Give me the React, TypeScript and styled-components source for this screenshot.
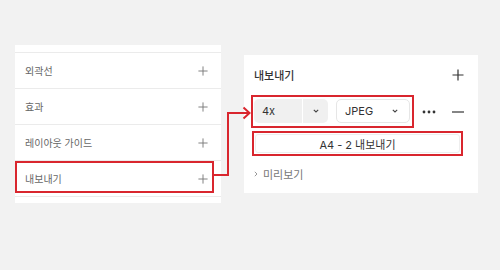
import styled, { createGlobalStyle } from 'styled-components'

const GlobalStyle = createGlobalStyle`
  * { box-sizing: border-box; }
  body {
    margin: 0;
    background: #f2f2f2;
    font-family: Inter, "Noto Sans CJK KR", sans-serif;
  }
`

const RED = '#d9262e'

const Page = styled.div`
  position: relative;
  width: 500px;
  height: 270px;
  display: flex;
  align-items: flex-start;
  gap: 23px;
  padding-left: 15px;
  background: #f2f2f2;
`

const LeftPanel = styled.div`
  margin-top: 45px;
  width: 206px;
  background: #fff;
  padding: 7px 0 6px;
`

const Row = styled.div<{ $active?: boolean }>`
  position: relative;
  height: 36px;
  display: flex;
  align-items: center;
  justify-content: space-between;
  padding: 0 13px 0 10px;
  border-top: 1px solid #ebebeb;
  font-size: 10px;
  color: #666;
  &:last-child { border-bottom: 1px solid #ebebeb; height: 37px; }
  &::after {
    content: '';
    display: ${(p) => (p.$active ? 'block' : 'none')};
    position: absolute;
    top: 0;
    bottom: 3px;
    left: 0;
    right: 7px;
    border: 2px solid ${RED};
  }
`

const RightPanel = styled.div`
  margin-top: 55px;
  width: 234px;
  background: #fff;
  padding: 12px 14px 11px 10px;
  display: flex;
  flex-direction: column;
`

const TitleRow = styled.div`
  height: 16px;
  display: flex;
  align-items: center;
  justify-content: space-between;
  font-size: 11px;
  font-weight: 500;
  color: #333;
`

const SettingsRow = styled.div`
  margin-top: 12px;
  display: flex;
  align-items: center;
`

const Highlight = styled.div<{ $shift: number }>`
  margin-left: ${(p) => p.$shift}px;
  border: 2px solid ${RED};
`

const SelectGroup = styled(Highlight)`
  display: flex;
  gap: 8px;
  padding: 2px 2px 3px 1px;
`

const ScaleSelect = styled.div`
  width: 74px;
  height: 24px;
  display: flex;
  background: #f0f0f0;
  border-radius: 5px;
  font-size: 11px;
  color: #333;
`

const ScaleValue = styled.div`
  width: 49px;
  display: flex;
  align-items: center;
  padding-left: 8px;
  border-right: 1px solid #fff;
`

const ScaleCaret = styled.div`
  flex: 1;
  display: flex;
  align-items: center;
  justify-content: center;
`

const FormatSelect = styled.div`
  width: 74px;
  height: 24px;
  display: flex;
  align-items: center;
  justify-content: space-between;
  padding: 0 11px 0 8px;
  background: #fff;
  border: 1px solid #e6e6e6;
  border-radius: 5px;
  font-size: 11px;
  color: #333;
`

const IconButton = styled.div<{ $ml: number }>`
  margin-left: ${(p) => p.$ml}px;
  display: flex;
  align-items: center;
`

const ButtonFrame = styled(Highlight)`
  margin-top: 3px;
  width: 211px;
  padding: 1px;
`

const ExportButton = styled.div`
  height: 19px;
  display: flex;
  align-items: center;
  justify-content: center;
  border: 1px solid #eee;
  border-radius: 3px;
  font-size: 11px;
  color: #333;
`

const PreviewRow = styled.div`
  margin-top: 10px;
  height: 16px;
  display: flex;
  align-items: center;
  gap: 5px;
  font-size: 11px;
  color: #777;
`

const Connector = styled.svg`
  position: absolute;
  left: 0;
  top: 0;
  pointer-events: none;
`

const Plus = ({ size, color, w }: { size: number; color: string; w: number }) => (
  <svg width={size} height={size} viewBox="0 0 12 12">
    <path d="M6 0.5V11.5M0.5 6H11.5" stroke={color} strokeWidth={w} fill="none" />
  </svg>
)

const Caret = () => (
  <svg width="6" height="4" viewBox="0 0 6 4">
    <path d="M0.8 0.8L3 3L5.2 0.8" stroke="#444" strokeWidth="1.1" fill="none" />
  </svg>
)

const sections = ['외곽선', '효과', '레이아웃 가이드', '내보내기']

export default function App() {
  return (
    <>
      <GlobalStyle />
      <Page>
        <LeftPanel>
          {sections.map((s, i) => (
            <Row key={s} $active={i === sections.length - 1}>
              <span>{s}</span>
              <Plus size={10} color="#777" w={1.1} />
            </Row>
          ))}
        </LeftPanel>

        <RightPanel>
          <TitleRow>
            <span>내보내기</span>
            <Plus size={12} color="#333" w={1.2} />
          </TitleRow>
          <SettingsRow>
            <SelectGroup $shift={-3}>
              <ScaleSelect>
                <ScaleValue>4x</ScaleValue>
                <ScaleCaret><Caret /></ScaleCaret>
              </ScaleSelect>
              <FormatSelect>
                <span>JPEG</span>
                <Caret />
              </FormatSelect>
            </SelectGroup>
            <IconButton $ml={8}>
              <svg width="14" height="4" viewBox="0 0 14 4">
                <circle cx="2" cy="2" r="1.4" fill="#333" />
                <circle cx="7" cy="2" r="1.4" fill="#333" />
                <circle cx="12" cy="2" r="1.4" fill="#333" />
              </svg>
            </IconButton>
            <IconButton $ml={16}>
              <svg width="12" height="2" viewBox="0 0 12 2">
                <path d="M0 1H12" stroke="#333" strokeWidth="1.2" />
              </svg>
            </IconButton>
          </SettingsRow>
          <ButtonFrame $shift={-2}>
            <ExportButton>A4 - 2 내보내기</ExportButton>
          </ButtonFrame>
          <PreviewRow>
            <svg width="4" height="6" viewBox="0 0 4 6">
              <path d="M0.8 0.8L3 3L0.8 5.2" stroke="#999" strokeWidth="1" fill="none" />
            </svg>
            <span>미리보기</span>
          </PreviewRow>
        </RightPanel>

        <Connector width="500" height="270">
          <path d="M213 175H228V113H249" stroke={RED} strokeWidth="2" fill="none" />
          <path d="M243.5 107.5L249.5 113L243.5 118.5" stroke={RED} strokeWidth="2" fill="none" />
        </Connector>
      </Page>
    </>
  )
}
